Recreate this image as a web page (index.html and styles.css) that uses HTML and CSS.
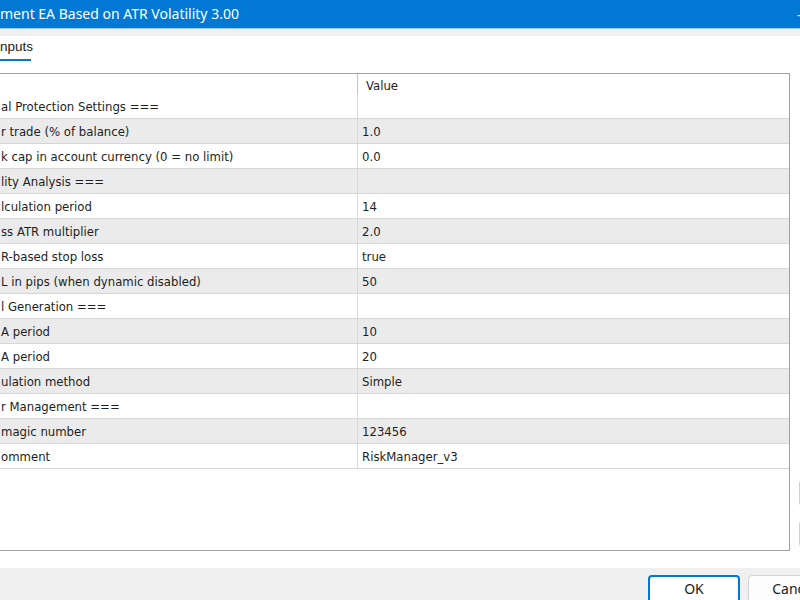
FILE: index.html
```html
<!DOCTYPE html>
<html lang="en">
<head>
<meta charset="UTF-8">
<title>EA Inputs</title>
<link rel="stylesheet" href="styles.css">
</head>
<body>
    <div class="titlebar">
        <span class="title">ment EA Based on ATR Volatility 3.00</span>
        <span class="minimize">&ndash;</span>
    </div>
    <div class="strip"></div>

    <div class="page">
        <div class="tabs">
            <div class="tab active">nputs</div>
        </div>

        <div class="content">
            <div class="grid">
                <div class="row header">
                    <div class="cell name"></div>
                    <div class="cell value">Value</div>
                </div>
                <div class="row first">
                    <div class="cell name">al Protection Settings ===</div>
                    <div class="cell value"></div>
                </div>
                <div class="row alt">
                    <div class="cell name">r trade (% of balance)</div>
                    <div class="cell value">1.0</div>
                </div>
                <div class="row">
                    <div class="cell name">k cap in account currency (0 = no limit)</div>
                    <div class="cell value">0.0</div>
                </div>
                <div class="row alt">
                    <div class="cell name">lity Analysis ===</div>
                    <div class="cell value"></div>
                </div>
                <div class="row">
                    <div class="cell name">lculation period</div>
                    <div class="cell value">14</div>
                </div>
                <div class="row alt">
                    <div class="cell name">ss ATR multiplier</div>
                    <div class="cell value">2.0</div>
                </div>
                <div class="row">
                    <div class="cell name">R-based stop loss</div>
                    <div class="cell value">true</div>
                </div>
                <div class="row alt">
                    <div class="cell name">L in pips (when dynamic disabled)</div>
                    <div class="cell value">50</div>
                </div>
                <div class="row">
                    <div class="cell name">l Generation ===</div>
                    <div class="cell value"></div>
                </div>
                <div class="row alt">
                    <div class="cell name">A period</div>
                    <div class="cell value">10</div>
                </div>
                <div class="row">
                    <div class="cell name">A period</div>
                    <div class="cell value">20</div>
                </div>
                <div class="row alt">
                    <div class="cell name">ulation method</div>
                    <div class="cell value">Simple</div>
                </div>
                <div class="row">
                    <div class="cell name">r Management ===</div>
                    <div class="cell value"></div>
                </div>
                <div class="row alt">
                    <div class="cell name">magic number</div>
                    <div class="cell value">123456</div>
                </div>
                <div class="row">
                    <div class="cell name">omment</div>
                    <div class="cell value">RiskManager_v3</div>
                </div>
            </div>

            <!-- side buttons, mostly off screen -->
            <div class="side">
                <div class="side-btn"></div>
                <div class="side-btn"></div>
            </div>
        </div>
    </div>

    <div class="footer">
        <button class="btn default">OK</button>
        <button class="btn">Cancel</button>
    </div>
</body>
</html>
```

FILE: styles.css
```css
html, body {
    margin: 0;
    padding: 0;
    width: 800px;
    height: 600px;
    overflow: hidden;
    background-color: #f0f0f0;
    font-family: "Noto Sans", "Liberation Sans", sans-serif;
}

/* Window title */
.titlebar {
    height: 28px;
    background-color: #0078d4;
    color: #fff;
    display: flex;
    align-items: center;
    justify-content: space-between;
    font-size: 14px;
    border-bottom: 1px solid #9cc8ec;
}
.title {
    white-space: nowrap;
    padding-bottom: 1px;
}
.minimize {
    margin-right: -4px;
    font-size: 14px;
}
.strip {
    height: 7px;
    background-color: #f0f0f0;
}

/* Tab page */
.page {
    background-color: #fff;
    height: 532px;
    overflow: hidden;
}
.tabs {
    height: 25px;
    display: flex;
}
.tab {
    font-family: "Liberation Sans", Arial, sans-serif;
    font-size: 13.5px;
    color: #1a1a1a;
    line-height: 20px;
    padding-top: 1px;
    width: 31px;
    border-bottom: 2px solid #0078d4;
    box-sizing: border-box;
    height: 25px;
    white-space: nowrap;
}

.content {
    display: flex;
    margin-top: 12px;
}

/* Inputs grid */
.grid {
    flex: none;
    margin-left: -1px;
    width: 791px;
    height: 478px;
    box-sizing: border-box;
    border: 1px solid #a0a0a0;
    font-family: "DejaVu Sans Condensed", "DejaVu Sans", sans-serif;
    font-size: 13px;
    color: #1e1e1e;
}
.row {
    display: flex;
    height: 25px;
    box-sizing: border-box;
    border-bottom: 1px solid #d6d6d6;
}
.row.alt {
    background-color: #ebebeb;
}
.row.header {
    height: 20px;
    border-bottom: none;
}
.cell {
    display: flex;
    align-items: center;
    white-space: nowrap;
    overflow: hidden;
    padding-top: 1px;
    box-sizing: border-box;
}
.cell.name {
    width: 357px;
    padding-left: 1px;
}
.cell.value {
    flex: 1;
    padding-left: 4px;
    border-left: 1px solid #dadada;
}
.header .cell.value {
    border-left-color: #c4c4c4;
    padding-left: 8px;
    padding-top: 3px;
}

/* Load / save buttons on the right */
.side {
    flex: none;
    margin-left: 9px;
    display: flex;
    flex-direction: column;
    justify-content: flex-end;
    gap: 15px;
    padding-bottom: 4px;
}
.side-btn {
    width: 40px;
    height: 24px;
    border: 1px solid #d0d0d0;
    border-radius: 3px;
    background-color: #fdfdfd;
}

/* Dialog buttons */
.footer {
    height: 32px;
    display: flex;
    gap: 8px;
    padding-top: 7px;
    padding-left: 648px;
    overflow: hidden;
}
.btn {
    flex: none;
    width: 92px;
    height: 30px;
    font-family: "Noto Sans", "Liberation Sans", sans-serif;
    font-size: 14px;
    color: #1a1a1a;
    background-color: #fdfdfd;
    border: 1px solid #d0d0d0;
    border-radius: 4px;
    padding: 0;
    padding-bottom: 3px;
}
.btn.default {
    border: 2px solid #0078d4;
    background-color: #fff;
}
```
